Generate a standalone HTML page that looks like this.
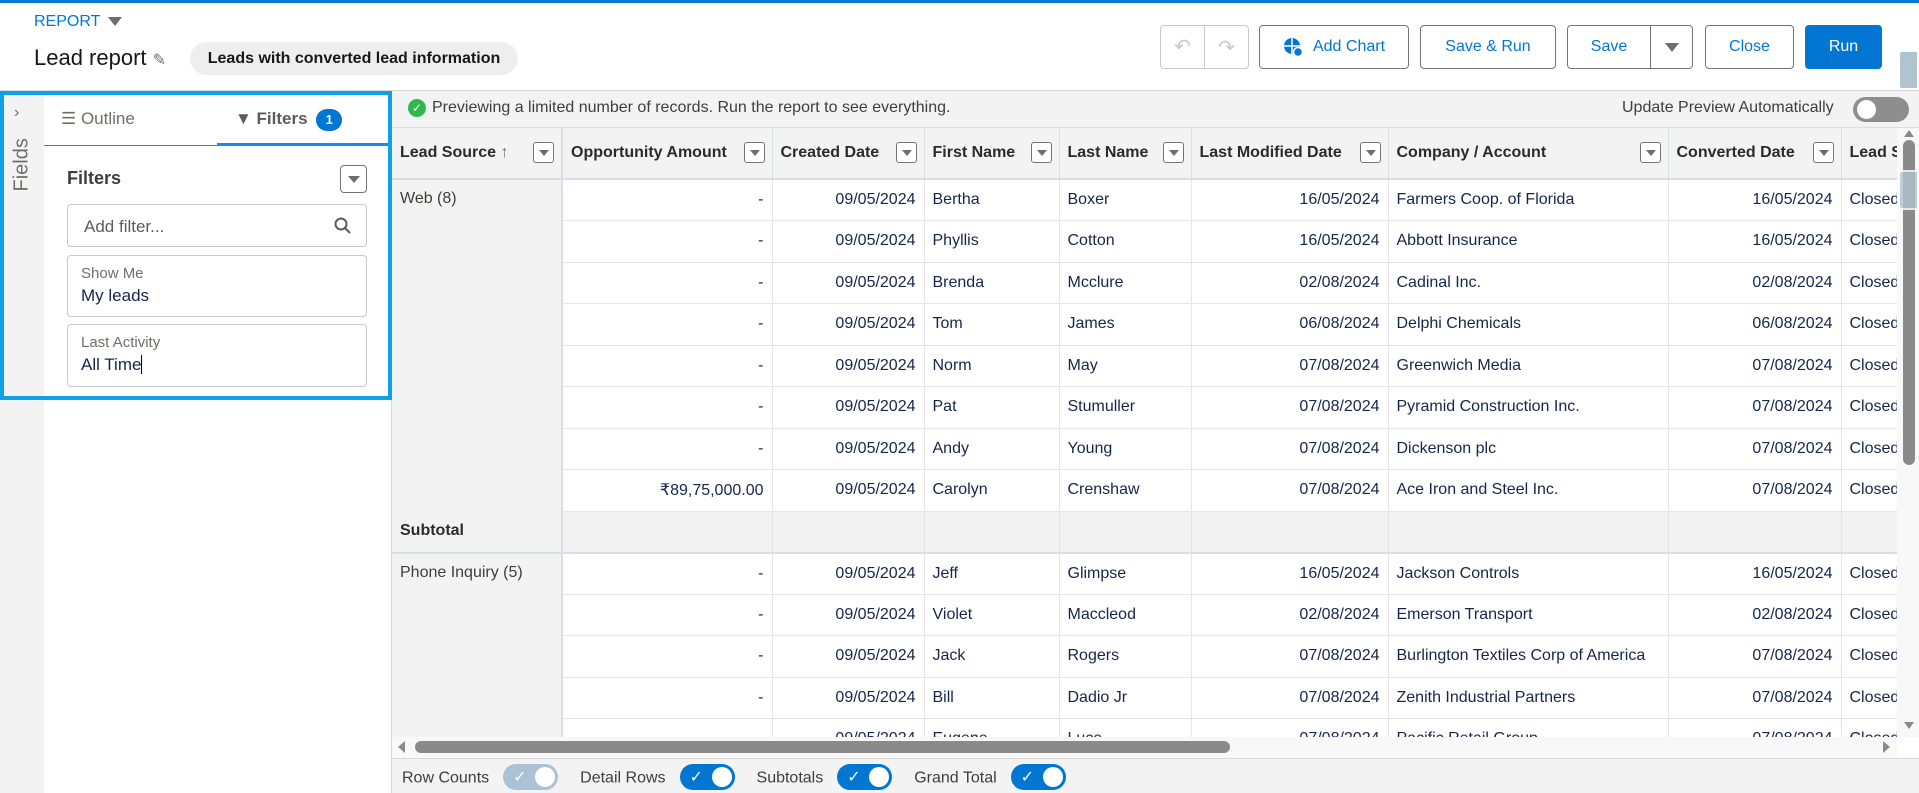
<!DOCTYPE html>
<html><head><meta charset="utf-8">
<style>
*{box-sizing:border-box;margin:0;padding:0}
body{width:1919px;height:793px;overflow:hidden;background:#fff;font-family:"Liberation Sans",sans-serif;color:#181818;position:relative}
.abs{position:absolute}
.btn{position:absolute;top:25px;height:44px;border:1px solid #747474;border-radius:4px;background:#fff;color:#0176d3;font-size:16px;display:flex;align-items:center;justify-content:center}
table{border-collapse:collapse;table-layout:fixed;font-size:16px;color:#16264a}
td,th{height:41.5px;border-right:1px solid #e5e5e5;border-bottom:1px solid #e5e5e5;padding:0 8px;white-space:nowrap;overflow:hidden}
th{background:#f3f3f3;font-weight:bold;color:#2b2b2b;text-align:left;height:51px;border-right:1px solid #d8dde6;border-bottom:2px solid #d8dde6;position:relative}
th .dd{position:absolute;right:7px;top:14px;width:21px;height:21px;border:1px solid #747474;border-radius:3px;background:#fff}
th .dd:after{content:"";position:absolute;left:5px;top:7px;border-left:5px solid transparent;border-right:5px solid transparent;border-top:6px solid #706e6b}
.r{text-align:right}
.g{background:#f3f3f3;vertical-align:top;padding-top:10px;color:#3e3e3c;border-right:2px solid #d8dde6;border-bottom:none}
.sub td{background:#f3f3f3;font-weight:bold;color:#2b2b2b;border-bottom:2px solid #d8dde6}
.tog{display:inline-block;width:55px;height:26px;border-radius:13px;background:#0176d3;position:relative;vertical-align:middle;margin:-3px 22px 0 14px}
.tog:after{content:"";position:absolute;right:3px;top:3px;width:20px;height:20px;border-radius:50%;background:#fff}
.tog:before{content:"✓";position:absolute;left:10px;top:3px;color:#fff;font-size:16px}
</style></head><body>
<div class="abs" style="left:0;top:0;width:1919px;height:3px;background:#0176d3"></div>
<div class="abs" style="left:34px;top:13px;font-size:16px;color:#0176d3">REPORT <span style="display:inline-block;border-left:7px solid transparent;border-right:7px solid transparent;border-top:9px solid #706e6b;vertical-align:middle;margin-left:3px"></span></div>
<div class="abs" style="left:34px;top:45px;font-size:22px;color:#181818">Lead report <span style="font-size:16px;color:#706e6b">✎</span></div>
<div class="abs" style="left:190px;top:42px;width:328px;height:33px;border-radius:17px;background:#eeeeee;font-size:16px;font-weight:bold;line-height:33px;text-align:center">Leads with converted lead information</div>

<div class="btn" style="left:1160px;width:89px;border-color:#c9c9c9;color:#c9c9c9;font-size:20px"><span style="flex:1;text-align:center;border-right:1px solid #c9c9c9;line-height:42px">↶</span><span style="flex:1;text-align:center">↷</span></div>
<div class="btn" style="left:1259px;width:150px"><svg width="20" height="20" viewBox="0 0 20 20" style="margin-right:10px"><circle cx="9" cy="9" r="8" fill="#0176d3"/><path d="M9 1v16M1 9h16" stroke="#fff" stroke-width="1.5"/><circle cx="15" cy="15" r="4.5" fill="#0176d3" stroke="#fff" stroke-width="1.5"/></svg>Add Chart</div>
<div class="btn" style="left:1420px;width:136px">Save &amp; Run</div>
<div class="btn" style="left:1567px;width:126px;justify-content:flex-start"><span style="width:83px;text-align:center;border-right:1px solid #747474;line-height:42px">Save</span><span style="flex:1;display:flex;justify-content:center"><span style="border-left:7px solid transparent;border-right:7px solid transparent;border-top:9px solid #706e6b"></span></span></div>
<div class="btn" style="left:1705px;width:89px">Close</div>
<div class="btn" style="left:1805px;width:77px;background:#0176d3;border-color:#0176d3;color:#fff">Run</div>
<div class="abs" style="left:1898px;top:50px;width:21px;height:40px;background:#b0c4d0;border-radius:4px 0 0 4px;border:2px solid #fff"></div>

<div class="abs" style="left:0;top:90px;width:1919px;height:1px;background:#d8d8d8"></div>
<div class="abs" style="left:0;top:91px;width:44px;height:702px;background:#f3f3f3"></div>
<div class="abs" style="left:44px;top:91px;width:348px;height:702px;background:#fff;border-right:1px solid #d8d8d8"></div>
<div class="abs" style="left:0;top:91px;width:392px;height:309px;border:4px solid #0ea1e6"></div>
<div class="abs" style="left:14px;top:104px;color:#706e6b;font-size:16px">›</div>
<div class="abs" style="left:2px;top:160px;color:#706e6b;font-size:20px;transform:rotate(-90deg);transform-origin:center;width:40px;text-align:center">Fields</div>
<div class="abs" style="left:44px;top:145px;width:173px;height:1px;background:#747474"></div>
<div class="abs" style="left:217px;top:143px;width:171px;height:3px;background:#1b8af0"></div>
<div class="abs" style="left:61px;top:109px;font-size:17px;color:#706e6b">☰ Outline</div>
<div class="abs" style="left:235px;top:109px;font-size:17px;font-weight:bold;color:#5c5c5c">▼ Filters <span style="display:inline-block;width:26px;height:22px;border-radius:11px;background:#0176d3;color:#fff;font-size:13px;text-align:center;line-height:22px;margin-left:4px">1</span></div>
<div class="abs" style="left:67px;top:168px;font-size:18px;font-weight:bold;color:#3e3e3c">Filters</div>
<div class="abs" style="left:340px;top:165px;width:27px;height:28px;border:1px solid #747474;border-radius:4px"><span style="position:absolute;left:7px;top:10px;border-left:6px solid transparent;border-right:6px solid transparent;border-top:7px solid #706e6b"></span></div>
<div class="abs" style="left:67px;top:204px;width:300px;height:43px;border:1px solid #c9c9c9;border-radius:4px;font-size:17px;color:#5c5c5c;padding:12px 16px">Add filter...<svg class="abs" style="right:14px;top:12px" width="18" height="18" viewBox="0 0 18 18"><circle cx="7" cy="7" r="5.5" fill="none" stroke="#5c5c5c" stroke-width="2"/><path d="M11 11l5 5" stroke="#5c5c5c" stroke-width="2"/></svg></div>
<div class="abs" style="left:67px;top:255px;width:300px;height:62px;border:1px solid #c9c9c9;border-radius:4px;padding:9px 13px"><div style="font-size:15px;color:#706e6b">Show Me</div><div style="font-size:17px;color:#16264a;margin-top:4px">My leads</div></div>
<div class="abs" style="left:67px;top:324px;width:300px;height:63px;border:1px solid #c9c9c9;border-radius:4px;padding:9px 13px"><div style="font-size:15px;color:#706e6b">Last Activity</div><div style="font-size:17px;color:#16264a;margin-top:4px">All Time<span style="border-left:1px solid #000"></span></div></div>

<div class="abs" style="left:392px;top:91px;width:1527px;height:37px;background:#f3f3f3;border-bottom:1px solid #d8dde6"></div>
<div class="abs" style="left:408px;top:99px;width:18px;height:18px;border-radius:50%;background:#2fb84d;color:#fff;font-size:12px;text-align:center;line-height:18px">✓</div>
<div class="abs" style="left:432px;top:99px;font-size:16px;color:#3e3e3c">Previewing a limited number of records. Run the report to see everything.</div>
<div class="abs" style="left:1622px;top:99px;font-size:16px;color:#3e3e3c">Update Preview Automatically</div>
<div class="abs" style="left:1853px;top:97px;width:56px;height:25px;border-radius:13px;background:#8e8e8e"><span style="position:absolute;left:4px;top:3px;width:19px;height:19px;border-radius:50%;background:#fff"></span></div>

<div class="abs" style="left:392px;top:128px;width:1505px;height:609px;overflow:hidden">
<table style="width:1560px">
<colgroup><col style="width:170px"><col style="width:210px"><col style="width:152px"><col style="width:135px"><col style="width:132px"><col style="width:197px"><col style="width:280px"><col style="width:173px"><col style="width:111px"></colgroup>
<tr><th style="border-right:2px solid #d8dde6">Lead Source <span style="color:#706e6b;font-weight:normal">↑</span><span class="dd"></span></th><th>Opportunity Amount<span class="dd"></span></th><th>Created Date<span class="dd"></span></th><th>First Name<span class="dd"></span></th><th>Last Name<span class="dd"></span></th><th>Last Modified Date<span class="dd"></span></th><th>Company / Account<span class="dd"></span></th><th>Converted Date<span class="dd"></span></th><th>Lead Status</th></tr>
<tr><td class="g" rowspan="8">Web (8)</td><td class="r">-</td><td class="r">09/05/2024</td><td>Bertha</td><td>Boxer</td><td class="r">16/05/2024</td><td>Farmers Coop. of Florida</td><td class="r">16/05/2024</td><td>Closed</td></tr>
<tr><td class="r">-</td><td class="r">09/05/2024</td><td>Phyllis</td><td>Cotton</td><td class="r">16/05/2024</td><td>Abbott Insurance</td><td class="r">16/05/2024</td><td>Closed</td></tr>
<tr><td class="r">-</td><td class="r">09/05/2024</td><td>Brenda</td><td>Mcclure</td><td class="r">02/08/2024</td><td>Cadinal Inc.</td><td class="r">02/08/2024</td><td>Closed</td></tr>
<tr><td class="r">-</td><td class="r">09/05/2024</td><td>Tom</td><td>James</td><td class="r">06/08/2024</td><td>Delphi Chemicals</td><td class="r">06/08/2024</td><td>Closed</td></tr>
<tr><td class="r">-</td><td class="r">09/05/2024</td><td>Norm</td><td>May</td><td class="r">07/08/2024</td><td>Greenwich Media</td><td class="r">07/08/2024</td><td>Closed</td></tr>
<tr><td class="r">-</td><td class="r">09/05/2024</td><td>Pat</td><td>Stumuller</td><td class="r">07/08/2024</td><td>Pyramid Construction Inc.</td><td class="r">07/08/2024</td><td>Closed</td></tr>
<tr><td class="r">-</td><td class="r">09/05/2024</td><td>Andy</td><td>Young</td><td class="r">07/08/2024</td><td>Dickenson plc</td><td class="r">07/08/2024</td><td>Closed</td></tr>
<tr><td class="r">₹89,75,000.00</td><td class="r">09/05/2024</td><td>Carolyn</td><td>Crenshaw</td><td class="r">07/08/2024</td><td>Ace Iron and Steel Inc.</td><td class="r">07/08/2024</td><td>Closed</td></tr>
<tr class="sub"><td style="border-right:2px solid #d8dde6">Subtotal</td><td></td><td></td><td></td><td></td><td></td><td></td><td></td><td></td></tr>
<tr><td class="g" rowspan="5">Phone Inquiry (5)</td><td class="r">-</td><td class="r">09/05/2024</td><td>Jeff</td><td>Glimpse</td><td class="r">16/05/2024</td><td>Jackson Controls</td><td class="r">16/05/2024</td><td>Closed</td></tr>
<tr><td class="r">-</td><td class="r">09/05/2024</td><td>Violet</td><td>Maccleod</td><td class="r">02/08/2024</td><td>Emerson Transport</td><td class="r">02/08/2024</td><td>Closed</td></tr>
<tr><td class="r">-</td><td class="r">09/05/2024</td><td>Jack</td><td>Rogers</td><td class="r">07/08/2024</td><td>Burlington Textiles Corp of America</td><td class="r">07/08/2024</td><td>Closed</td></tr>
<tr><td class="r">-</td><td class="r">09/05/2024</td><td>Bill</td><td>Dadio Jr</td><td class="r">07/08/2024</td><td>Zenith Industrial Partners</td><td class="r">07/08/2024</td><td>Closed</td></tr>
<tr><td class="r">-</td><td class="r">09/05/2024</td><td>Eugene</td><td>Luce</td><td class="r">07/08/2024</td><td>Pacific Retail Group</td><td class="r">07/08/2024</td><td>Closed</td></tr>
</table>
</div>
<div class="abs" style="left:1897px;top:128px;width:22px;height:609px;background:#f8f8f8"></div>
<div class="abs" style="left:1903px;top:140px;width:12px;height:325px;border-radius:6px;background:#8a8a8a"></div>
<div class="abs" style="left:1904px;top:130px;border-left:5px solid transparent;border-right:5px solid transparent;border-bottom:7px solid #8a8a8a"></div>
<div class="abs" style="left:1904px;top:722px;border-left:5px solid transparent;border-right:5px solid transparent;border-top:7px solid #8a8a8a"></div>
<div class="abs" style="left:1898px;top:170px;width:21px;height:40px;background:#b0c4d0;border-radius:4px 0 0 4px;border:2px solid #fff;opacity:.8"></div>
<div class="abs" style="left:392px;top:737px;width:1505px;height:21px;background:#f8f8f8"></div>
<div class="abs" style="left:398px;top:741px;border-top:6px solid transparent;border-bottom:6px solid transparent;border-right:7px solid #8a8a8a"></div>
<div class="abs" style="left:415px;top:741px;width:815px;height:12px;border-radius:6px;background:#8a8a8a"></div>
<div class="abs" style="left:1883px;top:741px;border-top:6px solid transparent;border-bottom:6px solid transparent;border-left:7px solid #8a8a8a"></div>
<div class="abs" style="left:392px;top:758px;width:1527px;height:35px;background:#f3f3f3;border-top:1px solid #d8d8d8;padding:8px 10px;font-size:16px;color:#3e3e3c">Row Counts<span class="tog" style="background:#aac1d6"></span>Detail Rows<span class="tog"></span>Subtotals<span class="tog"></span>Grand Total<span class="tog"></span></div>
</body></html>
